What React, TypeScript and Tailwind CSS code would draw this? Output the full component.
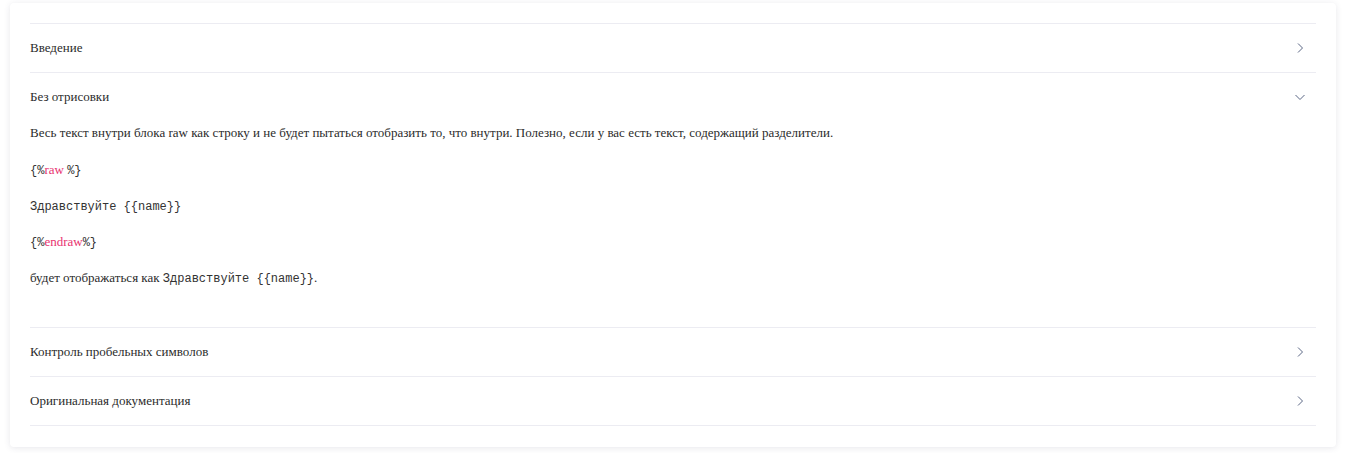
import React, { useState } from 'react';

const serif = { fontFamily: '"Liberation Serif", "Times New Roman", serif' };

const Chevron = ({ open }: { open: boolean }) => (
  <svg
    width="12"
    height="12"
    viewBox="0 0 12 12"
    fill="none"
    stroke="#5b6785"
    strokeWidth="1"
    className="mr-[10px]"
  >
    {open ? <path d="M1.5 4l4.5 4.5L10.5 4" /> : <path d="M4 1.5l4.5 4.5L4 10.5" />}
  </svg>
);

// inline code; leading-none keeps it from growing the serif line box
const Code = ({ children }: { children: React.ReactNode }) => (
  <code className="font-['Liberation_Mono',monospace] text-[12px] leading-none text-[#333]">{children}</code>
);

const Tag = ({ children }: { children: React.ReactNode }) => (
  <span className="text-[#e8336f]">{children}</span>
);

const sections = [
  'Введение',
  'Без отрисовки',
  'Контроль пробельных символов',
  'Оригинальная документация',
];

const App = () => {
  const [open, setOpen] = useState(1);

  return (
    <div className="bg-white min-h-[453px] pt-[3px] pl-[10px] pr-[20px]" style={serif}>
      <div className="bg-white rounded-[4px] shadow-[0_1px_6px_rgba(60,60,90,0.12)] px-5 pt-5 pb-[21px]">
        {sections.map((title, i) => (
          <div key={title} className={`border-t border-[#ececf2] ${i === sections.length - 1 ? 'border-b' : ''}`}>
            <button
              onClick={() => setOpen(open === i ? -1 : i)}
              className="w-full h-12 flex items-center justify-between text-[13px] text-[#2b2b2b] cursor-pointer"
            >
              <span>{title}</span>
              <Chevron open={open === i} />
            </button>
            {open === i && i === 1 && (
              <div className="pt-[2px] pb-[23px] text-[13px] leading-5 text-[#2b2b2b]">
                <p className="mb-[17px]">
                  Весь текст внутри блока raw как строку и не будет пытаться отобразить то, что внутри. Полезно, если у вас есть текст, содержащий разделители.
                </p>
                <p className="mb-4">
                  <Code>{'{%'}</Code>
                  <Tag>raw </Tag>
                  <Code>{'%}'}</Code>
                </p>
                <p className="mb-4">
                  <Code>{'Здравствуйте {{name}}'}</Code>
                </p>
                <p className="mb-4">
                  <Code>{'{%'}</Code>
                  <Tag>endraw</Tag>
                  <Code>{'%}'}</Code>
                </p>
                <p className="mb-4">
                  будет отображаться как <Code>{'Здравствуйте {{name}}'}</Code>.
                </p>
              </div>
            )}
          </div>
        ))}
      </div>
    </div>
  );
};

export default App;
